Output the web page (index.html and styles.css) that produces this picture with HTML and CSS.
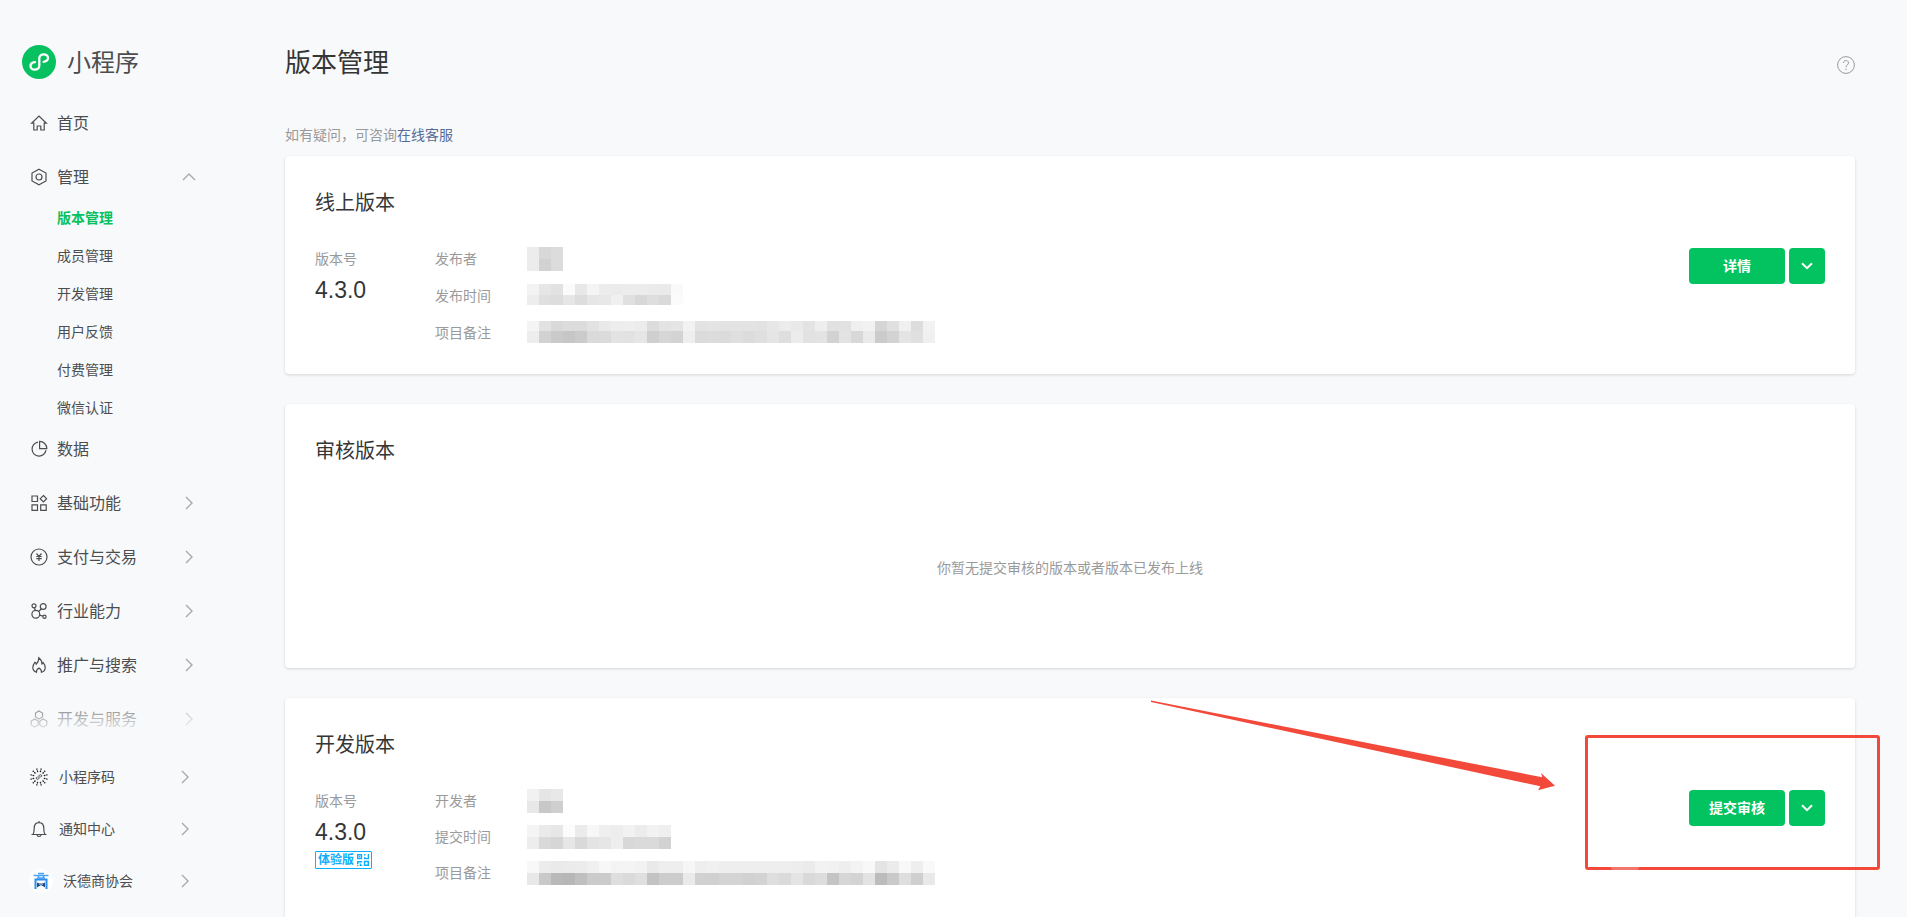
FILE: index.html
```
<!DOCTYPE html>
<html lang="zh-CN">
<head>
  <meta charset="UTF-8">
  <meta name="viewport" content="width=device-width, initial-scale=1.0">
  <title>版本管理 - 小程序</title>
  <link rel="stylesheet" href="styles.css">
</head>
<body>
  <div class="layout">
    <aside class="sidebar">
      <a class="logo" href="#">
        <svg width="34" height="34" viewBox="0 0 34 34">
          <circle cx="17" cy="17" r="17" fill="#07c160"/>
          <path d="M21.600 16.800c2.600-.4 4.400-1.700 4.400-3.700 0-2.100-1.800-3.700-4.200-3.700S17.300 11 17.300 13.300v7.400c0 2.300-2 3.900-4.500 3.900S8.500 23 8.500 20.900c0-2 1.800-3.300 4.400-3.700" fill="none" stroke="#fff" stroke-width="2.300" stroke-linecap="round"/>
        </svg>
        <span>小程序</span>
      </a>

      <nav class="menu">
        <ul class="menu-list">
          <li class="menu-item">
            <a class="menu-link" href="#">
              <svg class="icon" viewBox="0 0 18 18"><path d="M1.6 9.2 9 2l7.4 7.2h-2.2V16h-3.4v-4H7.2v4H3.8V9.2z"/></svg>
              <span>首页</span>
            </a>
          </li>
          <li class="menu-item open">
            <a class="menu-link" href="#">
              <svg class="icon" viewBox="0 0 18 18"><path d="M9 1.2 16 5v8l-7 3.8L2 13V5z"/><circle cx="9" cy="9" r="3"/></svg>
              <span>管理</span>
              <svg class="arrow" viewBox="0 0 14 14"><path d="M1 10l6-6 6 6"/></svg>
            </a>
            <ul class="submenu">
              <li><a class="active" href="#">版本管理</a></li>
              <li><a href="#">成员管理</a></li>
              <li><a href="#">开发管理</a></li>
              <li><a href="#">用户反馈</a></li>
              <li><a href="#">付费管理</a></li>
              <li><a href="#">微信认证</a></li>
            </ul>
          </li>
          <li class="menu-item">
            <a class="menu-link" href="#">
              <svg class="icon" viewBox="0 0 18 18"><path d="M8 2.2A7 7 0 1 0 16 10.200M9.600 1.400V8.600H16.800A7.200 7.200 0 0 0 9.600 1.400z"/></svg>
              <span>数据</span>
            </a>
          </li>
          <li class="menu-item">
            <a class="menu-link" href="#">
              <svg class="icon" viewBox="0 0 18 18"><path d="M2 2h5.500v5.500H2zM2 10.800h5.500v5.500H2zM10.700 10.800h5.500v5.500h-5.500zM13.400 1.500l3.200 3.200-3.200 3.200-3.200-3.200z"/></svg>
              <span>基础功能</span>
              <svg class="arrow" viewBox="0 0 14 14"><path d="M4 1l6 6-6 6"/></svg>
            </a>
          </li>
          <li class="menu-item">
            <a class="menu-link" href="#">
              <svg class="icon" viewBox="0 0 18 18"><circle cx="9" cy="9" r="8"/><path d="M6.500 5.500 9 8.300l2.500-2.800M9 8.300V13M6.300 8.500h5.400M6.300 10.700h5.400"/></svg>
              <span>支付与交易</span>
              <svg class="arrow" viewBox="0 0 14 14"><path d="M4 1l6 6-6 6"/></svg>
            </a>
          </li>
          <li class="menu-item">
            <a class="menu-link" href="#">
              <svg class="icon" viewBox="0 0 18 18"><circle cx="4" cy="3.800" r="2"/><circle cx="13.200" cy="4.500" r="2.900"/><circle cx="5.800" cy="12.300" r="3.900"/><circle cx="14.500" cy="14.700" r="1.600"/><path d="M4.600 5.700l.5 2.600M11.500 6.800 8.600 9.500M9.600 13.100l3.300 1"/></svg>
              <span>行业能力</span>
              <svg class="arrow" viewBox="0 0 14 14"><path d="M4 1l6 6-6 6"/></svg>
            </a>
          </li>
          <li class="menu-item">
            <a class="menu-link" href="#">
              <svg class="icon" viewBox="0 0 18 18"><path d="M6.400 16.300C4 15.500 2.800 13.500 2.800 11.300c0-2.300 1.200-3.600 2.200-5.100.8.500 1.200 1.200 1.300 2C8 6.500 8.800 4.300 8.800 1.700c2.200 1.700 3.200 3.600 3.200 6.300.6-.3 1-.8 1.200-1.400 1.300 1.500 2 3 2 4.800 0 2.200-1.300 4.100-3.700 4.900.2-1.800-.7-3.100-2.500-4.300-1.800 1.200-2.800 2.500-2.600 4.300z"/></svg>
              <span>推广与搜索</span>
              <svg class="arrow" viewBox="0 0 14 14"><path d="M4 1l6 6-6 6"/></svg>
            </a>
          </li>
          <li class="menu-item">
            <a class="menu-link" href="#">
              <svg class="icon" viewBox="0 0 18 18"><path d="M9 1l3.500 2v4L9 9 5.500 7V3zM4.700 9l3.500 2v4l-3.500 2-3.500-2v-4zM13.300 9l3.500 2v4l-3.500 2-3.500-2v-4z"/></svg>
              <span>开发与服务</span>
              <svg class="arrow" viewBox="0 0 14 14"><path d="M4 1l6 6-6 6"/></svg>
            </a>
          </li>
        </ul>
      </nav>

      <ul class="side-footer">
        <li>
          <a class="footer-link" href="#">
            <svg class="icon code-icon" viewBox="0 0 18 18">
              <g stroke-width="1.300" stroke-dasharray="1.300 .8 1.700 9">
                <path d="M9 .2V4M9 17.800V14M.2 9H4M17.800 9H14" transform="rotate(15 9 9)"/>
                <path d="M9 .2V4M9 17.800V14M.2 9H4M17.800 9H14" transform="rotate(45 9 9)"/>
                <path d="M9 .2V4M9 17.800V14M.2 9H4M17.800 9H14" transform="rotate(75 9 9)"/>
              </g>
              <path d="M10.300 8.900c1 0 1.500-.5 1.500-1.100s-.6-1.100-1.300-1.100S9 7.200 9 8v2c0 .8-.7 1.300-1.500 1.300s-1.300-.4-1.300-1.100.5-1.100 1.500-1.100" stroke-width=".8"/>
            </svg>
            <span>小程序码</span>
            <svg class="arrow" viewBox="0 0 14 14"><path d="M4 1l6 6-6 6"/></svg>
          </a>
        </li>
        <li>
          <a class="footer-link" href="#">
            <svg class="icon" viewBox="0 0 18 18"><path d="M1.500 14.500h15M3 14.500c1-1.500 1.200-3 1.200-6C4.200 5 6.200 2.700 9 2.700s4.800 2.300 4.800 5.800c0 3 .2 4.500 1.200 6M9 2.700V1M7 14.700c.2 2.300 3.800 2.300 4 0"/></svg>
            <span>通知中心</span>
            <svg class="arrow" viewBox="0 0 14 14"><path d="M4 1l6 6-6 6"/></svg>
          </a>
        </li>
        <li>
          <a class="footer-link account" href="#">
            <svg class="avatar" viewBox="0 0 24 24">
              <circle cx="12" cy="12" r="12" fill="#fff"/>
              <path d="M4.500 6.500h15M9 4.500h6M8 9h8M9.500 6.500V9M14.500 6.500V9" stroke="#4aa3f5" stroke-width="1.500"/>
              <path d="M6.500 20v-9.500h11V20" fill="none" stroke="#2f8ff0" stroke-width="2"/>
              <path d="M8 13.500l2.500 1h3l2.500-1v5l-2.200-1.500h-3.600L8 18.500z" fill="#1d4f86"/>
              <path d="M10.500 15.500l1.500 1 1.500-1" fill="none" stroke="#fff"/>
            </svg>
            <span>沃德商协会</span>
            <svg class="arrow" viewBox="0 0 14 14"><path d="M4 1l6 6-6 6"/></svg>
          </a>
        </li>
      </ul>
    </aside>

    <main class="main">
      <header class="page-head">
        <h1>版本管理</h1>
        <button class="help" type="button" aria-label="帮助">
          <svg width="18" height="18" viewBox="0 0 18 18"><circle cx="9" cy="9" r="8.400"/><path d="M6.500 7C6.500 3.700 11.500 3.700 11.500 6.900 11.500 8.700 9 9 9 11.300M9 12.700V14"/></svg>
        </button>
      </header>
      <p class="hint">如有疑问，可咨询<a href="#">在线客服</a></p>

      <section class="card">
        <h2>线上版本</h2>
        <div class="card-body">
          <div class="version">
            <span class="label">版本号</span>
            <strong>4.3.0</strong>
          </div>
          <dl class="meta">
            <dt>发布者</dt>
            <dd class="mosaic" data-rows="ecd8dc ecd2dc"></dd>
            <dt>发布时间</dt>
            <dd class="mosaic short" data-rows="f3e6e2fbe8f4ecebececebeaf9 eddfdde6dde6e8f0e0d8ded9fb"></dd>
            <dt>项目备注</dt>
            <dd class="mosaic note" data-rows="f4e2d9dcdce2e9edeeecdce3e5f2e3e4e3e3e3e2e7ece9e3eee1e2eff2d5e0f0ddf2 edd2cac6cbdadbe3e2e6cfd6d3eedbdcdbdfdcdfe5deece2e3d2e3d8eacbd3e4e0f0"></dd>
          </dl>
          <div class="actions">
            <button class="btn" type="button">详情</button>
            <button class="btn btn-more" type="button" aria-label="更多">
              <svg width="12" height="8" viewBox="0 0 12 8"><path d="M1 1.200l5 5 5-5"/></svg>
            </button>
          </div>
        </div>
      </section>

      <section class="card card-audit">
        <h2>审核版本</h2>
        <p class="empty">你暂无提交审核的版本或者版本已发布上线</p>
      </section>

      <section class="card card-dev">
        <h2>开发版本</h2>
        <div class="card-body">
          <div class="version">
            <span class="label">版本号</span>
            <strong>4.3.0</strong>
            <a class="badge" href="#">
              体验版
              <svg width="12" height="12" viewBox="0 0 12 12"><path d="M.7.700h3.800v3.800H.7zM7.500 7.500h3.800v3.800H7.500z" fill="none" stroke="#10aeff" stroke-width="1.400"/><path d="M2 2h1.300v1.300H2zM7 0h1.500v1.500H7zM10.700 0H12v5.200H7V3h1.500v1h2.200zM0 7h5.200v1.500H1.500V10H0zM0 10.800h1.300V12H0zM2.700 9.500H4v1.200h1.200V12H2.700z" fill="#10aeff"/></svg>
            </a>
          </div>
          <dl class="meta">
            <dt>开发者</dt>
            <dd class="mosaic" data-rows="f1e5e8 e8c8cf"></dd>
            <dt>提交时间</dt>
            <dd class="mosaic" data-rows="f4eae7fcebf7efedf2ecf2ef edd9d6e6d9e3e6eed8dadad2"></dd>
            <dt>项目备注</dt>
            <dd class="mosaic" data-rows="f8eceaebecf0f7f3f4f2e9eeeef6eef0eeeeeeeeeeeeedebf2f1eef3f8e4ebf8eef9 e8c9b9b7c0cbcbdedadfc3ccccead1d0d4d4d1d3dedae4d9ddc4d6d3e3bcc9decfe9"></dd>
          </dl>
          <div class="actions">
            <button class="btn" type="button">提交审核</button>
            <button class="btn btn-more" type="button" aria-label="更多">
              <svg width="12" height="8" viewBox="0 0 12 8"><path d="M1 1.200l5 5 5-5"/></svg>
            </button>
          </div>
        </div>
        <svg class="mark-arrow" width="404" height="91" viewBox="0 0 404 91"><path d="M0 .5 391.300 77.300 390 73l14 12.700-17 4.600 2.300-4L0 2z"/></svg>
        <div class="mark-box"></div>
      </section>
    </main>
  </div>

  <script>
    // 隐私信息打码：每两位十六进制表示一格的灰度
    document.querySelectorAll('.mosaic').forEach((el) => {
      el.dataset.rows.split(' ').forEach((row) => {
        const line = document.createElement('div');
        line.className = 'mosaic-row';
        row.match(/../g).forEach((v) => {
          const cell = document.createElement('i');
          cell.style.background = '#' + v + v + v;
          line.appendChild(cell);
        });
        el.appendChild(line);
      });
    });
  </script>
</body>
</html>
```
FILE: styles.css
```
* {
  box-sizing: border-box;
}

body {
  margin: 0;
  font-family: "Liberation Sans", "Noto Sans CJK SC", sans-serif;
  font-size: 14px;
  color: #353535;
  background: #f8f9fb;
}

ul, dl, dd, h1, h2, p {
  margin: 0;
  padding: 0;
}

ul {
  list-style: none;
}

a {
  color: inherit;
  text-decoration: none;
}

button {
  font-family: inherit;
  border: none;
  padding: 0;
  cursor: pointer;
}

.layout {
  display: flex;
  height: 100vh;
  overflow: hidden;
}

/* 左侧导航 */
.sidebar {
  flex: 0 0 240px;
  display: flex;
  flex-direction: column;
  padding-bottom: 10px;
  color: #4c4d4f;
}

.logo {
  display: flex;
  align-items: center;
  gap: 11px;
  height: 101px;
  padding: 45px 22px 22px;
  font-size: 24px;
  line-height: 34px;
}

.logo span {
  padding-top: 2px;
}

.menu {
  flex: 1;
  min-height: 0;
  overflow: hidden;
  position: relative;
}

.menu::after {
  content: "";
  position: absolute;
  left: 0;
  right: 0;
  bottom: 0;
  height: 60px;
  background: linear-gradient(rgba(248, 249, 251, 0), #f8f9fb 44px);
  pointer-events: none;
}

.menu-item {
  margin-bottom: 10px;
}

.menu-item.open {
  margin-bottom: 0;
}

.menu-link,
.footer-link {
  display: flex;
  align-items: center;
}

.menu-link span,
.footer-link span {
  padding-bottom: 2px;
}

.menu-link {
  height: 44px;
  padding: 0 44px 0 30px;
  gap: 9px;
  font-size: 16px;
}

.icon {
  width: 18px;
  height: 18px;
  fill: none;
  stroke: #4c4d4f;
  stroke-width: 1.2;
}

.arrow {
  width: 14px;
  height: 14px;
  margin-left: auto;
  fill: none;
  stroke: #a8a9ab;
  stroke-width: 1.4;
}

.submenu a {
  display: block;
  padding-left: 57px;
  line-height: 38px;
}

.submenu .active {
  color: #07c160;
  font-weight: 700;
}

.footer-link {
  height: 52px;
  padding: 0 48px 0 30px;
  gap: 11px;
}

.footer-link.account {
  padding-left: 29px;
  gap: 10px;
}

.code-icon {
  stroke: #222;
}

.avatar {
  width: 24px;
  height: 24px;
}

/* 主内容 */
.main {
  flex: 1;
  min-width: 0;
  padding: 42px 52px 0 45px;
}

.page-head {
  display: flex;
  justify-content: space-between;
  align-items: center;
  height: 42px;
}

.page-head h1 {
  font-size: 26px;
  font-weight: 400;
  line-height: 42px;
}

.help {
  height: 18px;
  margin-top: 4px;
  background: none;
}

.help svg {
  display: block;
  fill: none;
  stroke: #9a9a9a;
}

.hint {
  margin-top: 40px;
  color: #9a9a9a;
  line-height: 22px;
}

.hint a {
  color: #576b95;
}

.card {
  position: relative;
  margin: 10px 0 30px;
  padding: 30px 30px 29px;
  background: #fff;
  border-radius: 4px;
  box-shadow: 0 1px 3px rgba(0, 0, 0, 0.15);
}

.card + .card {
  margin-top: 0;
}

.card h2 {
  font-size: 20px;
  font-weight: 400;
  line-height: 34px;
}

.card-body {
  display: flex;
  margin-top: 27px;
}

.version {
  display: flex;
  flex-direction: column;
  align-items: flex-start;
  flex: 0 0 120px;
}

.version strong {
  margin-top: 5px;
  font-size: 23px;
  font-weight: 400;
  line-height: 28px;
}

.label,
.meta dt {
  color: #9a9a9a;
  line-height: 24px;
}

.meta {
  display: grid;
  grid-template-columns: 92px auto;
  grid-auto-rows: 24px;
  row-gap: 13px;
}

.mosaic-row {
  display: flex;
  height: 12px;
}

.mosaic-row i {
  width: 12px;
}

.mosaic.short .mosaic-row:first-child {
  height: 11px;
}

.mosaic.short .mosaic-row:last-child,
.mosaic.note .mosaic-row:first-child {
  height: 10px;
}

.actions {
  display: flex;
  gap: 4px;
  margin-left: auto;
  padding-top: 1px;
}

.btn {
  width: 96px;
  height: 36px;
  padding-bottom: 2px;
  border-radius: 4px;
  background: #02c360;
  color: #fff;
  font-size: 14px;
  font-weight: 700;
}

.btn-more {
  width: 36px;
}

.btn-more svg {
  fill: none;
  stroke: #fff;
  stroke-width: 2;
}

.card-audit {
  padding-bottom: 0;
}

.empty {
  padding: 89px 0;
  color: #9a9a9a;
  line-height: 22px;
  text-align: center;
}

.card-dev {
  padding-bottom: 60px;
}

.card-dev .meta {
  row-gap: 12px;
}

.badge {
  display: flex;
  align-items: center;
  gap: 3px;
  height: 18px;
  margin-top: 5px;
  padding: 0 2px;
  border: 1px solid #10aeff;
  border-radius: 1px;
  color: #10aeff;
  font-size: 12px;
  font-weight: 700;
  line-height: 14px;
}

/* 标注 */
.mark-arrow {
  position: absolute;
  top: 2px;
  right: 300px;
  fill: #f2493b;
}

.mark-box {
  position: absolute;
  top: 37px;
  right: -25px;
  width: 295px;
  height: 135px;
  border: 3px solid #f2493b;
  border-radius: 3px;
  pointer-events: none;
}

.mark-box::after {
  content: "";
  position: absolute;
  left: 23px;
  bottom: -3px;
  width: 28px;
  height: 3px;
  border-radius: 0 0 8px 8px;
  background: #f4756b;
}
```
